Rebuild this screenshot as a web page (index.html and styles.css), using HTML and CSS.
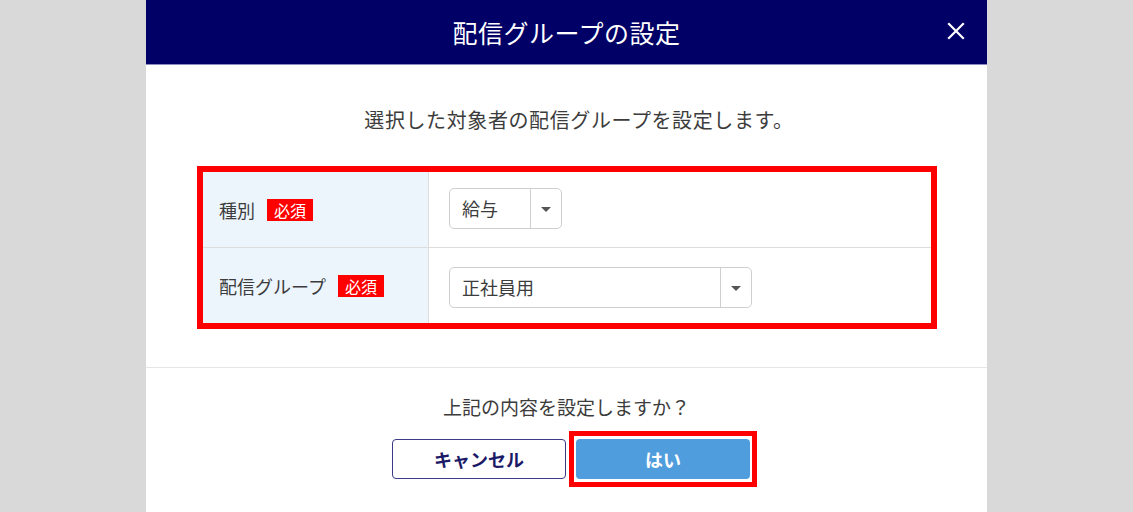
FILE: index.html
```html
<!DOCTYPE html>
<html lang="ja">
<head>
    <meta charset="UTF-8">
    <meta name="viewport" content="width=device-width, initial-scale=1.0">
    <title>配信グループの設定</title>
    <link rel="stylesheet" href="styles.css">
</head>
<body>
    <div class="modal">
        <div class="modal-header">
            <h1>配信グループの設定</h1>
            <span class="close">
                <svg width="18" height="18" viewBox="0 0 18 18"><path d="M2 2L16 16M16 2L2 16" stroke="#fff" stroke-width="2.2" stroke-linecap="square"/></svg>
            </span>
        </div>

        <div class="modal-body">
            <p class="lead">選択した対象者の配信グループを設定します。</p>

            <div class="highlight">
                <table class="form-table">
                    <tr>
                        <th>種別 <span class="required">必須</span></th>
                        <td>
                            <div class="select select-short">
                                <span class="select-value">給与</span>
                                <span class="select-caret"></span>
                            </div>
                        </td>
                    </tr>
                    <tr class="row-group">
                        <th>配信グループ <span class="required">必須</span></th>
                        <td>
                            <div class="select select-long">
                                <span class="select-value">正社員用</span>
                                <span class="select-caret"></span>
                            </div>
                        </td>
                    </tr>
                </table>
            </div>
        </div>

        <div class="modal-footer">
            <p class="question">上記の内容を設定しますか？</p>
            <div class="buttons">
                <button class="btn btn-cancel">キャンセル</button>
                <span class="mark">
                    <button class="btn btn-ok">はい</button>
                </span>
            </div>
        </div>
    </div>
</body>
</html>
```

FILE: styles.css
```css
body {
    margin: 0;
    background-color: #d9d9d9;
    font-family: "Noto Sans CJK JP", "Noto Sans", sans-serif;
    color: #3c3c3c;
}
.modal {
    width: 841px;
    height: 512px;
    margin: 0 auto;
    background-color: #fff;
    overflow: hidden;
}
.modal-header {
    height: 65px;
    background-color: #000066;
    border-bottom: 1px solid #8c8cc0;
    box-sizing: border-box;
    display: flex;
    align-items: center;
    justify-content: center;
    position: relative;
}
.modal-header h1 {
    margin: 0;
    color: #fff;
    font-size: 25px;
    font-weight: normal;
    letter-spacing: 0.5px;
}
.close {
    position: absolute;
    right: 22px;
    top: 22px;
    display: flex;
}
.modal-body {
    padding: 40px 50px 38px 51px;
}
.lead {
    margin: 0 0 31px;
    padding-left: 24px;
    text-align: center;
    font-size: 20px;
    line-height: 30px;
    letter-spacing: 0.6px;
}
.highlight {
    border: 6px solid #ff0000;
}
.form-table {
    width: 100%;
    border-collapse: collapse;
}
.form-table tr + tr th,
.form-table tr + tr td {
    border-top: 1px solid #dcdcdc;
}
.form-table th {
    width: 209px;
    height: 75px;
    padding: 0 0 0 16px;
    background-color: #edf5fc;
    border-right: 1px solid #dcdcdc;
    text-align: left;
    font-weight: normal;
    font-size: 18px;
    white-space: nowrap;
}
.form-table td {
    padding: 0 0 2px 20px;
}
.form-table .row-group td {
    padding: 4px 0 0 20px;
}
.required {
    display: inline-block;
    margin-left: 8px;
    padding: 0 7px;
    background-color: #ff0000;
    color: #fff;
    font-size: 16px;
    line-height: 22px;
    vertical-align: 1px;
}
.select {
    display: flex;
    height: 41px;
    border: 1px solid #cfcfcf;
    border-radius: 5px;
    box-sizing: border-box;
}
.select-short {
    width: 113px;
}
.select-long {
    width: 303px;
}
.select-value {
    flex: 1;
    padding-left: 12px;
    font-size: 18px;
    line-height: 39px;
}
.select-caret {
    width: 30px;
    border-left: 1px solid #cfcfcf;
    display: flex;
    align-items: center;
    justify-content: center;
}
.select-caret::after {
    content: "";
    border-left: 5px solid transparent;
    border-right: 5px solid transparent;
    border-top: 5px solid #555;
    margin-top: 1px;
}
.modal-footer {
    border-top: 1px solid #e6e6e6;
    padding-top: 25px;
    text-align: center;
}
.question {
    margin: 0 0 10px;
    font-size: 19px;
    line-height: 28px;
}
.buttons {
    display: flex;
    justify-content: center;
    align-items: center;
    gap: 3px;
    padding-left: 16px;
}
.mark {
    display: flex;
    padding: 3px 2px;
    border: 5px solid #ff0000;
}
.btn {
    width: 174px;
    height: 40px;
    border-radius: 4px;
    font-family: inherit;
    font-size: 18px;
    font-weight: bold;
    cursor: pointer;
}
.btn-cancel {
    background-color: #fff;
    color: #1a1a66;
    border: 1px solid #3a3a85;
}
.btn-ok {
    background-color: #4f9ddc;
    color: #fff;
    border: none;
}
```
